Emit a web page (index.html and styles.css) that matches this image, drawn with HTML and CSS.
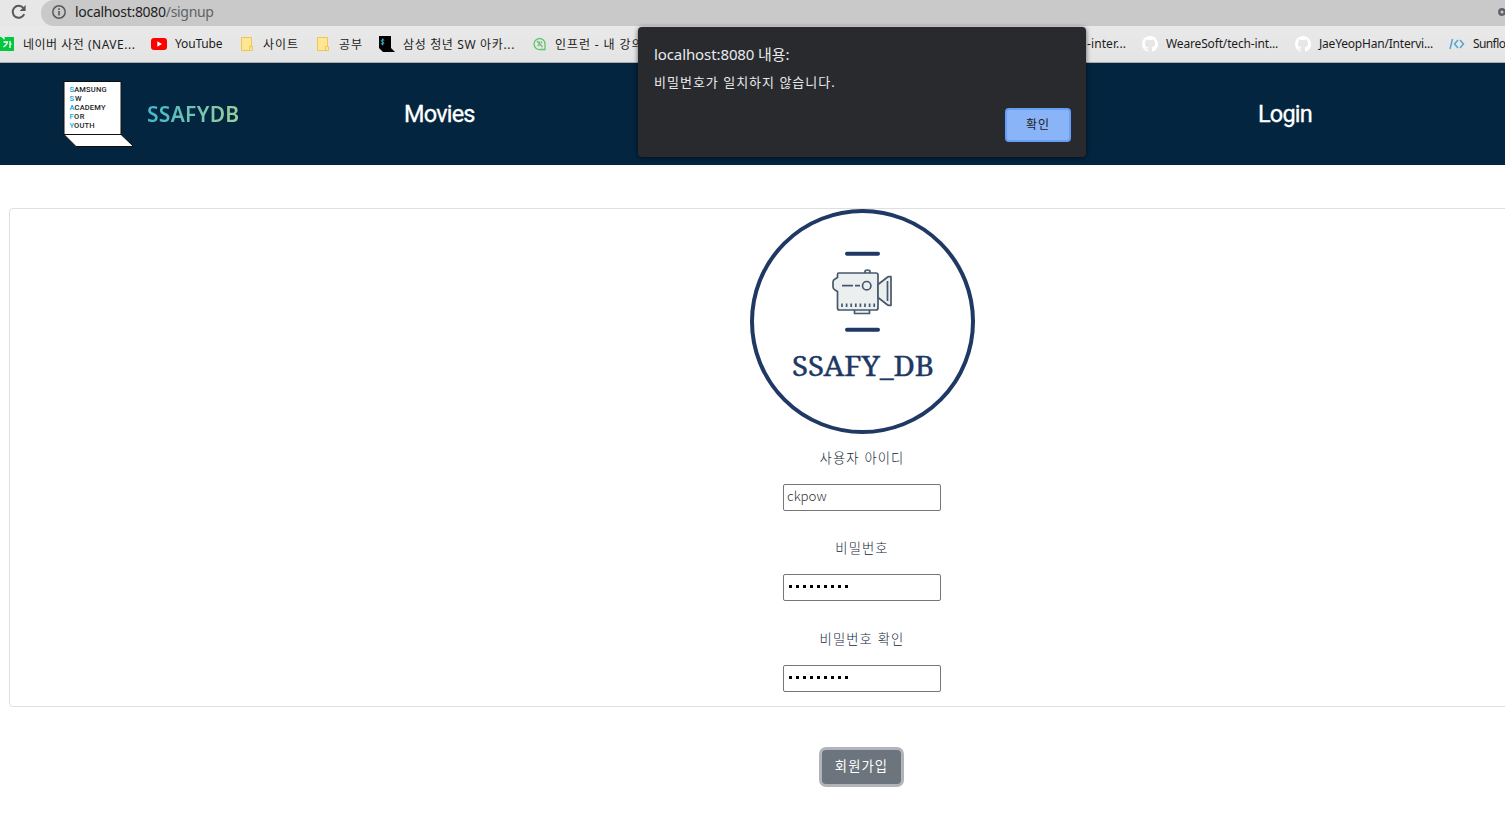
FILE: index.html
```
<!DOCTYPE html>
<html lang="ko">
<head>
<meta charset="utf-8">
<title>SSAFYDB</title>
<link rel="stylesheet" href="styles.css">
</head>
<body>
<div class="toolbar">
  <svg class="reload" width="16" height="16" viewBox="0 0 16 16"><path d="M13.2 10.2A6 6 0 1 1 12.3 3.9" fill="none" stroke="#55585c" stroke-width="2"/><path d="M14.6 1v6H8.600z" fill="#55585c"/></svg>
  <div class="address">
    <svg class="info" width="14" height="14" viewBox="0 0 14 14"><circle cx="7" cy="7" r="6.200" fill="none" stroke="#55585c" stroke-width="1.500"/><path d="M7 6v4.500M7 3.300v1.600" stroke="#55585c" stroke-width="1.600"/></svg>
    <span class="url">localhost:8080<span class="path">/signup</span></span>
    <svg class="key" width="7" height="10" viewBox="0 0 7 10"><circle cx="4" cy="5" r="2.700" fill="none" stroke="#5f6368" stroke-width="2.400"/></svg>
  </div>
</div>
<div class="bookmarks">
  <div class="bm b-naver"><svg width="16" height="16" viewBox="0 0 16 16"><path d="M0 1h16v14H0z" fill="#03c73c"/><path d="M3.500 1h3v3z" fill="#fff"/><path d="M5.500 6h4Q9 9 5.500 11M12 5v7M12 8h1.500" fill="none" stroke="#fff" stroke-width="1.300"/></svg><span>네이버 사전 (NAVE...</span></div>
  <div class="bm b-yt"><svg width="16" height="16" viewBox="0 0 16 16"><rect y="2" width="16" height="12" rx="3" fill="#f00"/><path d="M6.300 5.300v5.400L11 8z" fill="#fff"/></svg><span>YouTube</span></div>
  <div class="bm b-site"><svg width="16" height="16" viewBox="0 0 16 16"><path d="M.5 1.500h10v9h1v4H.5z" fill="#ffe694" stroke="#eec84e"/><path d="M8.500 14v-3.500h3" fill="none" stroke="#eec84e"/></svg><span>사이트</span></div>
  <div class="bm b-study"><svg width="16" height="16" viewBox="0 0 16 16"><path d="M.5 1.500h10v9h1v4H.5z" fill="#ffe694" stroke="#eec84e"/><path d="M8.500 14v-3.500h3" fill="none" stroke="#eec84e"/></svg><span>공부</span></div>
  <div class="bm b-ssafy"><svg width="16" height="16" viewBox="0 0 16 16"><path d="M0 0h12v12l4 4H4l-4-4z" fill="#000"/><path d="M5.300 4.200C2 2.800 1.500 5.300 3.500 6s2 2.700-1.500 1.700M3.700 2.400v7" fill="none" stroke="#42b4d5" stroke-width="1"/></svg><span>삼성 청년 SW 아카...</span></div>
  <div class="bm b-inf"><svg width="16" height="16" viewBox="0 0 16 16"><path d="M12 13.500H7A5.500 5.500 0 1 1 12 8z" fill="none" stroke="#64c46e" stroke-width="1.300"/><path d="M4 5l5.500 6M6.500 5.500v3L4.500 10M8.500 5.500v2" fill="none" stroke="#64c46e" stroke-width="1.300"/></svg><span>인프런 - 내 강의</span></div>
  <div class="bm b-inter"><span>-inter...</span></div>
  <div class="bm b-weare"><svg width="16" height="16" viewBox="0 0 16 16"><path fill="#fff" d="M8 0C3.580 0 0 3.580 0 8c0 3.540 2.290 6.530 5.470 7.590.4.070.55-.17.55-.38v-1.490c-2.230.48-2.690-.95-2.690-.95-.36-.91-.89-1.160-.89-1.160-.73-.49.05-.48.05-.48.81.05 1.230.83 1.230.83.72 1.230 1.880.87 2.330.66.070-.52.28-.87.5-1.070-1.780-.2-3.640-.89-3.640-3.950 0-.87.31-1.590.82-2.150-.08-.2-.36-1.020.08-2.120 0 0 .67-.21 2.200.82a7.600 7.600 0 0 1 4 0c1.530-1.040 2.200-.82 2.200-.82.44 1.100.16 1.920.08 2.120.51.56.82 1.270.82 2.150 0 3.070-1.870 3.750-3.650 3.950.29.25.54.73.54 1.480v2.190c0 .21.150.46.550.38A8 8 0 0 0 16 8c0-4.420-3.580-8-8-8z"/></svg><span>WeareSoft/tech-int...</span></div>
  <div class="bm b-jae"><svg width="16" height="16" viewBox="0 0 16 16"><path fill="#fff" d="M8 0C3.580 0 0 3.580 0 8c0 3.540 2.290 6.530 5.470 7.590.4.070.55-.17.55-.38v-1.490c-2.230.48-2.690-.95-2.690-.95-.36-.91-.89-1.160-.89-1.160-.73-.49.05-.48.05-.48.81.05 1.230.83 1.230.83.72 1.230 1.880.87 2.330.66.070-.52.28-.87.5-1.070-1.780-.2-3.640-.89-3.640-3.950 0-.87.31-1.590.82-2.150-.08-.2-.36-1.020.08-2.120 0 0 .67-.21 2.200.82a7.600 7.600 0 0 1 4 0c1.530-1.040 2.200-.82 2.200-.82.44 1.100.16 1.920.08 2.120.51.56.82 1.270.82 2.150 0 3.070-1.870 3.750-3.650 3.950.29.25.54.73.54 1.480v2.190c0 .21.150.46.550.38A8 8 0 0 0 16 8c0-4.420-3.580-8-8-8z"/></svg><span>JaeYeopHan/Intervi...</span></div>
  <div class="bm b-sun"><svg width="16" height="16" viewBox="0 0 16 16"><path d="M3.500 3L1 13M9 4L5.500 8 9 12M11 4l3.500 4-3.500 4" fill="none" stroke="#4f9fd4" stroke-width="1.400"/></svg><span>Sunflo</span></div>
</div>
<nav class="nav">
  <svg class="ssafy-logo" width="72" height="68" viewBox="0 0 72 68">
    <path d="M0 .5h57v53H0zM0 53.500h57l12.500 12H12z" fill="#fff" stroke="#111" stroke-width="1"/>
    <g class="logo-text">
      <text x="5.500" y="11.300" textLength="37"><tspan class="hl">S</tspan>AMSUNG</text>
      <text x="5.500" y="20.300" textLength="12"><tspan class="hl">S</tspan>W</text>
      <text x="5.500" y="29.300" textLength="36"><tspan class="hl">A</tspan>CADEMY</text>
      <text x="5.500" y="38.300" textLength="15"><tspan class="hl">F</tspan>OR</text>
      <text x="5.500" y="47" textLength="25"><tspan class="hl">Y</tspan>OUTH</text>
    </g>
  </svg>
  <span class="brand">SSAFYDB</span>
  <span class="link movies">Movies</span>
  <span class="link login">Login</span>
</nav>
<main class="page">
  <form class="card">
    <svg class="emblem" width="226" height="226" viewBox="0 0 226 226">
      <ellipse cx="113.500" cy="112.500" rx="110.500" ry="110.500" fill="#fff" stroke="#203864" stroke-width="4"/>
      <path d="M98 44.700h31M98 120.700h31" stroke="#203864" stroke-width="4" stroke-linecap="round"/>
      <g fill="#ebeff0" stroke="#46596b" stroke-width="1.700" stroke-linejoin="round">
        <path d="M116 64v-1.500q0-1.500 2.500-1.500t2.500 1.500V64M105.500 101v3.500h15V101"/>
        <path d="M89.500 64H127q2 0 2 2v33q0 2-2 2H90.500q-2 0-2-2V82.500L86 81q-2-1-2-3v-5q0-2 2-3l2.500-1.500V65.500q0-1.500 1-1.500z"/>
        <path d="M129 75.500l9-7q1-.8 2-.8h2v28.600h-2q-1 0-2-.8l-9-7z"/>
        <path d="M138.500 72v20M93 76.700h11M106 76.700h5M93 94.500v3.500M97.600 94.500v3.500M102.200 94.500v3.500M106.800 94.500v3.500M111.400 94.500v3.500M116 94.500v3.500M120.600 94.500v3.500M125.200 94.500v3.500"/>
        <circle cx="117.700" cy="76.700" r="4.200"/>
      </g>
      <text class="emblem-text" x="43" y="167" textLength="142" lengthAdjust="spacingAndGlyphs">SSAFY_DB</text>
    </svg>
    <label class="label">사용자 아이디</label>
    <div class="field">ckpow</div>
    <label class="label">비밀번호</label>
    <div class="field dots"><i></i><i></i><i></i><i></i><i></i><i></i><i></i><i></i><i></i></div>
    <label class="label">비밀번호 확인</label>
    <div class="field dots"><i></i><i></i><i></i><i></i><i></i><i></i><i></i><i></i><i></i></div>
  </form>
  <button class="submit" type="button">회원가입</button>
</main>
<div class="dialog">
  <div class="dialog-title">localhost:8080 내용:</div>
  <div class="dialog-msg">비밀번호가 일치하지 않습니다.</div>
  <button class="ok" type="button">확인</button>
</div>
</body>
</html>
```
FILE: styles.css
```
* { box-sizing: border-box; }
html { overflow: hidden; }
body { margin: 0; width: 1505px; height: 813px; overflow: hidden; background: #fff; font-family: "Noto Sans", "Noto Sans CJK KR", sans-serif; }
svg { display: block; flex: none; }
.toolbar { height: 26px; background: #e7e7e7; display: flex; padding-left: 11px; gap: 14px; }
.reload { margin-top: 4px; }
.address { flex: 1; height: 26px; background: #c9c9c9; border-radius: 13px 0 0 13px; display: flex; align-items: center; padding-left: 11px; }
.info { margin-top: -2px; }
.url { flex: 1; padding-left: 9px; font-size: 14px; line-height: 20px; letter-spacing: -0.3px; color: #222; margin-top: -2px; }
.path { color: #606367; }
.key { margin-top: -3px; }
.bookmarks { height: 37px; background: linear-gradient(#e9e9e9, #e4e4e4); border-bottom: 1px solid #a9adb0; display: flex; overflow: hidden; font-size: 12px; color: #1c1c1c; white-space: nowrap; }
.bm { flex: none; display: flex; align-items: center; gap: 8px; height: 35px; overflow: hidden; letter-spacing: -0.15px; }
.b-naver { width: 153px; margin-left: -2px; gap: 9px; letter-spacing: 0.5px; }
.b-yt { width: 90px; }
.b-site { width: 76px; gap: 6px; letter-spacing: 1px; }
.b-study { width: 62px; gap: 6px; letter-spacing: 1px; }
.b-ssafy { width: 154px; letter-spacing: 0.65px; }
.b-inf { width: 554px; gap: 6px; letter-spacing: 0.9px; }
.b-inter { width: 55px; letter-spacing: 0.1px; }
.b-weare { width: 153px; letter-spacing: -0.15px; }
.b-jae { width: 154px; letter-spacing: -0.2px; }
.b-sun { width: 56px; letter-spacing: -0.6px; }
.nav { height: 102px; background: #03253f; display: flex; align-items: center; padding-left: 64px; }
.ssafy-logo { margin-top: 2px; overflow: visible; }
.logo-text { font-family: Roboto, sans-serif; font-size: 7.5px; font-weight: 500; fill: #222; }
.hl { fill: #00a7e1; }
.brand { width: 268px; padding-left: 11px; font-size: 21px; font-weight: 600; line-height: 30px; letter-spacing: 0.3px; background: linear-gradient(90deg, #42b8cc 11px, #9ad09a 103px); -webkit-background-clip: text; background-clip: text; color: transparent; }
.link { font-family: Roboto, sans-serif; font-size: 23.500px; font-weight: 400; -webkit-text-stroke: .3px #fff; line-height: 36px; color: #fff; letter-spacing: -0.8px; }
.movies { width: 854px; }
.page { padding: 43px 0 0 9px; }
.card { width: 1706px; height: 499px; border: 1px solid #dfdfdf; border-radius: 4px; display: flex; flex-direction: column; align-items: center; }
.card > * { flex: none; }
.emblem { margin-bottom: 11px; }
.emblem-text { font-family: "Noto Serif", "DejaVu Serif", serif; font-size: 27px; fill: #203864; stroke: #203864; stroke-width: .4px; }
.label { font-family: "Noto Sans CJK KR", sans-serif; font-weight: 300; font-size: 13.300px; line-height: 24px; height: 24px; letter-spacing: 1.1px; color: #14273a; }
.field { width: 158px; height: 27px; margin: 14px 0 25.400px; border: 1px solid #767676; border-radius: 2px; padding: 0 3px; font: 300 13.300px/22px "Noto Sans CJK KR", sans-serif; color: #333; }
.dots { display: flex; gap: 4px; padding: 10px 5px; }
.dots i { width: 3px; height: 3px; background: #000; }
.submit { display: block; width: 85px; height: 40px; margin: 40px 0 0 810px; padding: 0 0 2px; border: 3px solid #b1b5b9; border-radius: 7px; background: #6c757d; color: #fff; font: 400 13.300px/20px "Noto Sans CJK KR", sans-serif; letter-spacing: 1.1px; }
.dialog { position: absolute; left: 638px; top: 27px; width: 448px; height: 130px; background: #292a2d; border-radius: 4px; padding: 15px 15px 15px 16px; color: #e8eaed; box-shadow: 0 1px 5px rgba(0,0,0,.6); display: flex; flex-direction: column; }
.dialog-title { font-size: 15px; line-height: 24px; letter-spacing: -0.1px; }
.dialog-msg { font-size: 13px; line-height: 20px; margin-top: 6px; letter-spacing: 1px; }
.ok { align-self: flex-end; margin-top: 16px; width: 66px; height: 34px; flex: none; border: 2px solid #669df6; border-radius: 4px; background: #8ab4f8; color: #202124; font: 400 12px/18px "Noto Sans CJK KR", sans-serif; letter-spacing: 1px; padding: 0 0 2px; }
```
